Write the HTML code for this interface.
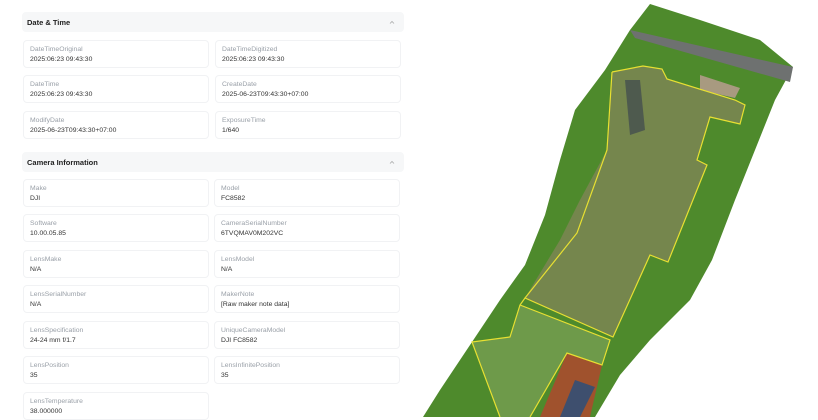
<!DOCTYPE html>
<html><head><meta charset="utf-8"><style>
*{margin:0;padding:0;box-sizing:border-box}
body{width:818px;height:417px;overflow:hidden;background:#fff;font-family:"Liberation Sans",sans-serif;position:relative}
.h{position:absolute;left:22px;width:382px;height:20px;background:#f6f7f8;border-radius:4px;font-size:7.5px;font-weight:bold;color:#222;padding:6px 0 0 5px}
.h svg{position:absolute;right:9px;top:8px}
.c{position:absolute;width:186px;height:28px;border:1px solid #f1f2f4;border-radius:4px;padding:4px 0 0 6px}
.l{font-size:6.8px;color:#9aa0a8;line-height:9px}
.v{font-size:6.8px;color:#333;line-height:11px}
</style></head><body>
<div class="h" style="top:12px">Date &amp; Time<svg width="6" height="4"><polyline points="1,3.5 3,1.5 5,3.5" fill="none" stroke="#aaa" stroke-width=".8"/></svg></div>
<div class="c" style="left:23px;top:40px"><div class="l">DateTimeOriginal</div><div class="v">2025:06:23 09:43:30</div></div>
<div class="c" style="left:215px;top:40px"><div class="l">DateTimeDigitized</div><div class="v">2025:06:23 09:43:30</div></div>
<div class="c" style="left:23px;top:75px"><div class="l">DateTime</div><div class="v">2025:06:23 09:43:30</div></div>
<div class="c" style="left:215px;top:75px"><div class="l">CreateDate</div><div class="v">2025-06-23T09:43:30+07:00</div></div>
<div class="c" style="left:23px;top:111px"><div class="l">ModifyDate</div><div class="v">2025-06-23T09:43:30+07:00</div></div>
<div class="c" style="left:215px;top:111px"><div class="l">ExposureTime</div><div class="v">1/640</div></div>
<div class="h" style="top:152px">Camera Information<svg width="6" height="4"><polyline points="1,3.5 3,1.5 5,3.5" fill="none" stroke="#aaa" stroke-width=".8"/></svg></div>
<div class="c" style="left:23px;top:179px"><div class="l">Make</div><div class="v">DJI</div></div>
<div class="c" style="left:214px;top:179px"><div class="l">Model</div><div class="v">FC8582</div></div>
<div class="c" style="left:23px;top:214px"><div class="l">Software</div><div class="v">10.00.05.85</div></div>
<div class="c" style="left:214px;top:214px"><div class="l">CameraSerialNumber</div><div class="v">6TVQMAV0M202VC</div></div>
<div class="c" style="left:23px;top:250px"><div class="l">LensMake</div><div class="v">N/A</div></div>
<div class="c" style="left:214px;top:250px"><div class="l">LensModel</div><div class="v">N/A</div></div>
<div class="c" style="left:23px;top:285px"><div class="l">LensSerialNumber</div><div class="v">N/A</div></div>
<div class="c" style="left:214px;top:285px"><div class="l">MakerNote</div><div class="v">[Raw maker note data]</div></div>
<div class="c" style="left:23px;top:321px"><div class="l">LensSpecification</div><div class="v">24-24 mm f/1.7</div></div>
<div class="c" style="left:214px;top:321px"><div class="l">UniqueCameraModel</div><div class="v">DJI FC8582</div></div>
<div class="c" style="left:23px;top:356px"><div class="l">LensPosition</div><div class="v">35</div></div>
<div class="c" style="left:214px;top:356px"><div class="l">LensInfinitePosition</div><div class="v">35</div></div>
<div class="c" style="left:23px;top:392px"><div class="l">LensTemperature</div><div class="v">38.000000</div></div>
<svg style="position:absolute;left:0;top:0" width="818" height="417">
<polygon points="650,4 700,20 760,40 793,67 775,100 755,150 735,200 712,260 690,300 650,340 620,375 595,417 423,417 440,390 470,345 500,300 525,265 545,215 560,160 575,110 605,70 630,30" fill="#4e8a2c"/>
<polygon points="612,72 643,66 662,69 667,79 735,100 745,105 740,124 710,117 697,160 707,165 668,262 650,255 613,337 525,298 560,240 580,200 607,150" fill="#75864d"/>
<polygon points="520,305 610,340 602,365 567,353 530,417 500,417 472,342 510,337" fill="#6e9a4a"/>
<polygon points="630,30 793,67 790,82 635,38" fill="#6e7170"/>
<polygon points="700,75 740,88 735,98 700,90" fill="#a89a80"/>
<polygon points="625,80 640,80 645,130 630,135" fill="#4e5a4e"/>
<polygon points="567,353 602,365 590,417 540,417" fill="#a0522d"/>
<polygon points="575,380 595,387 580,417 560,417" fill="#3e4f6e"/>
<polyline points="612,72 643,66 662,69 667,79 735,100 745,105 740,124 710,117 697,160 707,165 668,262 650,255 613,337 525,298 520,305 510,337 472,342 500,417" fill="none" stroke="#e8e032" stroke-width="1.2"/>
<polyline points="525,298 577,233 607,150 612,72" fill="none" stroke="#e8e032" stroke-width="1.2"/>
<polyline points="520,305 610,340 602,365 567,353 530,417" fill="none" stroke="#e8e032" stroke-width="1.2"/>
</svg>
</body></html>
